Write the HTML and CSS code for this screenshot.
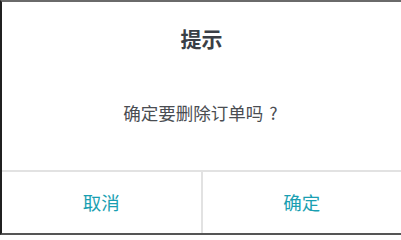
FILE: index.html
```html
<!DOCTYPE html>
<html lang="zh-CN">
<head>
<meta charset="utf-8">
<link rel="stylesheet" href="styles.css">
</head>
<body>
<div class="dialog">
  <div class="title">提示</div>
  <div class="message">确定要删除订单吗<span class="qmark">?</span></div>
  <div class="actions">
    <div class="btn">取消</div>
    <div class="btn">确定</div>
  </div>
</div>
</body>
</html>
```
FILE: styles.css
```css
html, body {
  margin: 0;
  padding: 0;
  background: #fff;
}
.dialog {
  box-sizing: border-box;
  width: 401px;
  height: 235px;
  border-top: 2px solid #6a6a6a;
  border-left: 2px solid #202020;
  border-bottom: 2px solid #555;
  display: flex;
  flex-direction: column;
  font-family: "Noto Sans CJK SC", "Noto Sans", sans-serif;
  background: #fff;
}
.title {
  padding-top: 22px;
  height: 28px;
  line-height: 28px;
  font-size: 21px;
  font-weight: bold;
  color: #3a3f46;
  text-align: center;
}
.message {
  margin-top: 49px;
  height: 24px;
  line-height: 24px;
  font-size: 17.5px;
  color: #4a4d52;
  text-align: center;
}
.qmark {
  display: inline-block;
  margin-left: 6px;
  margin-right: 2px;
}
.actions {
  margin-top: 45px;
  flex: 1;
  display: flex;
  border-top: 2px solid #e2e2e2;
}
.btn {
  flex: 1;
  display: flex;
  align-items: center;
  justify-content: center;
  font-size: 18.5px;
  color: #1a9fb2;
  padding-bottom: 2px;
}
.btn + .btn {
  border-left: 2px solid #e2e2e2;
}
```
